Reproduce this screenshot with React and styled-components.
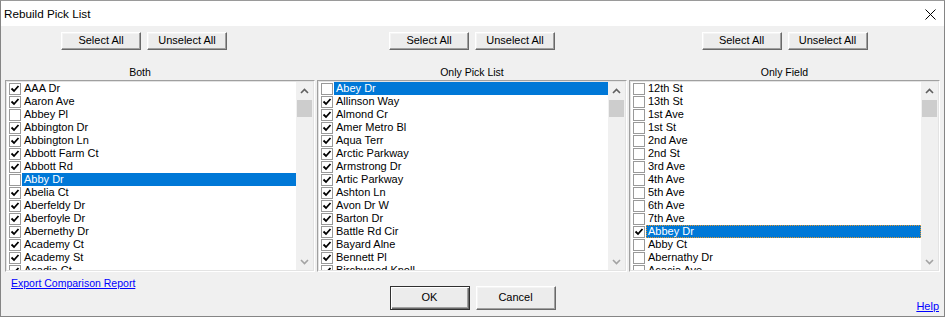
import React from "react"
import styled, { createGlobalStyle } from "styled-components"

const both = [
  ["AAA Dr", true],
  ["Aaron Ave", true],
  ["Abbey Pl", false],
  ["Abbington Dr", true],
  ["Abbington Ln", true],
  ["Abbott Farm Ct", true],
  ["Abbott Rd", true],
  ["Abby Dr", false],
  ["Abelia Ct", true],
  ["Aberfeldy Dr", true],
  ["Aberfoyle Dr", true],
  ["Abernethy Dr", true],
  ["Academy Ct", true],
  ["Academy St", true],
  ["Acadia Ct", true],
]

const pickList = [
  ["Abey Dr", false],
  ["Allinson Way", true],
  ["Almond Cr", true],
  ["Amer Metro Bl", true],
  ["Aqua Terr", true],
  ["Arctic Parkway", true],
  ["Armstrong Dr", true],
  ["Artic Parkway", true],
  ["Ashton Ln", true],
  ["Avon Dr W", true],
  ["Barton Dr", true],
  ["Battle Rd Cir", true],
  ["Bayard Alne", true],
  ["Bennett Pl", true],
  ["Birchwood Knoll", true],
]

const field = [
  ["12th St", false],
  ["13th St", false],
  ["1st Ave", false],
  ["1st St", false],
  ["2nd Ave", false],
  ["2nd St", false],
  ["3rd Ave", false],
  ["4th Ave", false],
  ["5th Ave", false],
  ["6th Ave", false],
  ["7th Ave", false],
  ["Abbey Dr", true],
  ["Abby Ct", false],
  ["Abernathy Dr", false],
  ["Acacia Ave", false],
]

const columns = [
  { title: "Both", items: both, selected: 7, buttonShift: 32, titleShift: 40 },
  { title: "Only Pick List", items: pickList, selected: 0 },
  { title: "Only Field", items: field, selected: 11, focused: true },
]

export default function App() {
  return (
    <>
      <GlobalStyle />
      <Window>
        <TitleBar>
          <Title>Rebuild Pick List</Title>
          <CloseButton>
            <svg width="11" height="11" viewBox="0 0 11 11">
              <path d="M0.5 0.5 L10.5 10.5 M10.5 0.5 L0.5 10.5" stroke="#000" strokeWidth="1" />
            </svg>
          </CloseButton>
        </TitleBar>
        <Body>
          <Columns>
            {columns.map((col) => (
              <Column key={col.title}>
                <ButtonRow $shift={col.buttonShift || 0}>
                  <PushButton>Select All</PushButton>
                  <PushButton>Unselect All</PushButton>
                </ButtonRow>
                <Caption $shift={col.titleShift || 0}>{col.title}</Caption>
                <ListBox>
                  <Rows>
                    {col.items.map(([name, checked], i) => (
                      <Row key={name}>
                        <CheckBox>
                          {checked && (
                            <svg width="10" height="10" viewBox="0 0 10 10">
                              <path d="M1.5 4.5 L4 7 L8.5 2" stroke="#000" strokeWidth="1.8" fill="none" />
                            </svg>
                          )}
                        </CheckBox>
                        <RowLabel $selected={col.selected === i} $focused={col.focused && col.selected === i}>
                          {name}
                        </RowLabel>
                      </Row>
                    ))}
                  </Rows>
                  <ScrollBar>
                    <ArrowButton $color="#606060">
                      <svg width="9" height="6" viewBox="0 0 9 6">
                        <path d="M1 5 L4.5 1.5 L8 5" stroke="currentColor" strokeWidth="1.6" fill="none" />
                      </svg>
                    </ArrowButton>
                    <Thumb />
                    <Track />
                    <ArrowButton $color="#a3a3a3">
                      <svg width="9" height="6" viewBox="0 0 9 6">
                        <path d="M1 1 L4.5 4.5 L8 1" stroke="currentColor" strokeWidth="1.6" fill="none" />
                      </svg>
                    </ArrowButton>
                  </ScrollBar>
                </ListBox>
              </Column>
            ))}
          </Columns>
          <Footer>
            <ReportLink>Export Comparison Report</ReportLink>
            <DialogButtons>
              <PushButton $default $tall>OK</PushButton>
              <PushButton $tall>Cancel</PushButton>
            </DialogButtons>
            <HelpLink>Help</HelpLink>
          </Footer>
        </Body>
      </Window>
    </>
  )
}

const GlobalStyle = createGlobalStyle`
  html, body {
    margin: 0;
    padding: 0;
    background: #f0f0f0;
  }
  body {
    font-family: "Liberation Sans", Arial, sans-serif;
    font-size: 10.5px;
    color: #000;
  }
`

const Window = styled.div`
  width: 945px;
  height: 317px;
  box-sizing: border-box;
  border: 1px solid #858585;
  border-top-color: #9a9a9a;
  background: #f0f0f0;
  display: flex;
  flex-direction: column;
`

const TitleBar = styled.div`
  height: 25px;
  flex: none;
  background: #fff;
  display: flex;
  align-items: center;
  justify-content: space-between;
  padding: 0 8px 0 3px;
`

const Title = styled.div`
  font-size: 11.7px;
  line-height: 16px;
  margin-top: 1px;
`

const CloseButton = styled.div`
  width: 11px;
  height: 11px;
  display: flex;
  margin-top: 1px;
`

const Body = styled.div`
  flex: 1;
  display: flex;
  flex-direction: column;
  padding: 6px 4px 0 4px;
  min-height: 0;
`

const Columns = styled.div`
  display: grid;
  grid-template-columns: 310px 310px 311px;
  column-gap: 2px;
`

const Column = styled.div`
  display: flex;
  flex-direction: column;
`

const ButtonRow = styled.div`
  display: flex;
  justify-content: center;
  gap: 6px;
  padding-right: ${(p) => p.$shift}px;
`

const PushButton = styled.div`
  width: 80px;
  height: ${(p) => (p.$tall ? 24 : 18)}px;
  box-sizing: border-box;
  display: flex;
  align-items: center;
  justify-content: center;
  font-size: 11px;
  background: #ececec;
  border: 1px solid;
  border-color: ${(p) => (p.$default ? "#303030" : "#fff #696969 #696969 #fff")};
  box-shadow: ${(p) =>
    p.$default
      ? "inset 1px 1px 0 #fff, inset -1px -1px 0 #696969, inset -2px -2px 0 #a0a0a0"
      : "inset -1px -1px 0 #a0a0a0, inset 1px 1px 0 #f4f4f4"};
  line-height: 13px;
  padding-bottom: 1px;
`

const Caption = styled.div`
  margin-top: 15px;
  margin-bottom: 1px;
  line-height: 14px;
  text-align: center;
  padding-right: ${(p) => p.$shift}px;
`

const ListBox = styled.div`
  height: 192px;
  box-sizing: border-box;
  display: flex;
  background: #fff;
  border: 1px solid;
  border-color: #a0a0a0 #fff #fff #a0a0a0;
  box-shadow: inset 1px 1px 0 #e3e3e3, inset -1px -1px 0 #e3e3e3;
  padding: 1px;
`

const Rows = styled.div`
  flex: 1;
  overflow: hidden;
  padding-left: 2px;
`

const Row = styled.div`
  height: 13px;
  display: flex;
  align-items: center;
`

const CheckBox = styled.div`
  width: 12px;
  height: 12px;
  flex: none;
  box-sizing: border-box;
  border: 1px solid #999;
  background: #fff;
  display: flex;
  align-items: center;
  justify-content: center;
  margin-right: 1px;
`

const RowLabel = styled.div`
  flex: 1;
  height: 13px;
  line-height: 13px;
  font-size: 11px;
  padding-left: 2px;
  white-space: nowrap;
  box-sizing: border-box;
  background: ${(p) => (p.$selected ? "#0078d7" : "transparent")};
  color: ${(p) => (p.$selected ? "#fff" : "#000")};
  outline: ${(p) => (p.$focused ? "1px dotted #e3962c" : "none")};
  outline-offset: -1px;
`

const ScrollBar = styled.div`
  width: 17px;
  flex: none;
  background: #f0f0f0;
  display: flex;
  flex-direction: column;
`

const ArrowButton = styled.div`
  height: 17px;
  display: flex;
  align-items: center;
  justify-content: center;
  color: ${(p) => p.$color};
`

const Thumb = styled.div`
  height: 17px;
  margin: 1px 1px 0 1px;
  background: #cdcdcd;
`

const Track = styled.div`
  flex: 1;
`

const Footer = styled.div`
  flex: 1;
  display: grid;
  grid-template-columns: 1fr auto 1fr;
`

const ReportLink = styled.a`
  align-self: start;
  justify-self: start;
  margin: 5px 0 0 6px;
  line-height: 13px;
  color: #0000ff;
  text-decoration: underline;
`

const DialogButtons = styled.div`
  display: flex;
  gap: 6px;
  margin-top: 14px;
  align-self: start;
`

const HelpLink = styled.a`
  align-self: end;
  justify-self: end;
  margin: 0 1px 3px 0;
  line-height: 13px;
  font-size: 11px;
  color: #0000ff;
  text-decoration: underline;
`
